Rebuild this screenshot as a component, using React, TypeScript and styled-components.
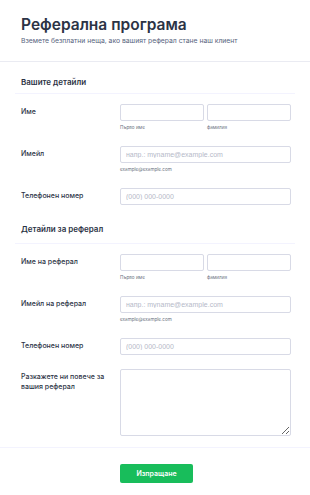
import React from "react";
import styled, { createGlobalStyle } from "styled-components";

const GlobalStyle = createGlobalStyle`
    html, body {
        margin: 0;
        padding: 0;
        background: #ffffff;
    }
    body {
        font-family: Inter, "Noto Sans", "DejaVu Sans", sans-serif;
        color: #2c3345;
    }
    * {
        box-sizing: border-box;
    }
`;

const Page = styled.div`
    width: 310px;
    background: #fff;
`;

const Header = styled.div`
    padding: 15px 21px 15px;
    border-bottom: 1px solid #eaebf2;
`;

const Title = styled.h1`
    margin: 0;
    font-size: 15.5px;
    line-height: 20px;
    font-weight: 600;
    color: #2c3345;
`;

const Subtitle = styled.p`
    margin: 1px 0 0;
    font-size: 6.8px;
    line-height: 10px;
    color: #57647e;
`;

const Section = styled.section`
    padding: 0 15px;
`;

const SectionTitle = styled.h2<{ $top: number; $bottom: number }>`
    margin: 0;
    padding: ${(p) => p.$top}px 6px ${(p) => p.$bottom}px;
    font-size: 8px;
    line-height: 12px;
    font-weight: 600;
    color: #2c3345;
    border-bottom: 1px solid #f3f3fe;
`;

const Body = styled.div`
    padding: 10px 0 0 6px;
`;

const Row = styled.div`
    display: grid;
    grid-template-columns: 99px 171px;
    margin-bottom: 14px;
`;

const Label = styled.label`
    font-size: 7px;
    line-height: 10px;
    font-weight: 500;
    color: #2c3345;
    padding-top: 3px;
    padding-right: 10px;
`;

const Fields = styled.div<{ $cols?: number }>`
    display: grid;
    grid-template-columns: ${(p) => (p.$cols === 2 ? "1fr 1fr" : "1fr")};
    column-gap: 3px;
`;

const Field = styled.div`
    display: flex;
    flex-direction: column;
`;

const Input = styled.input`
    height: 17px;
    width: 100%;
    margin: 0;
    padding: 0 5px;
    border: 1px solid #d8dae6;
    border-radius: 2px;
    font-family: "Liberation Sans", Arial, sans-serif;
    font-size: 7px;
    color: #2c3345;
    background: #fff;
    outline: none;
    &::placeholder {
        color: #b5b9c8;
    }
`;

const TextArea = styled.textarea`
    height: 67px;
    width: 100%;
    margin: 0;
    padding: 4px 5px;
    border: 1px solid #d8dae6;
    border-radius: 2px;
    font-family: "Liberation Sans", Arial, sans-serif;
    font-size: 7px;
    display: block;
    resize: vertical;
    outline: none;
`;

const SubLabel = styled.span`
    margin-top: 3px;
    font-size: 4.6px;
    line-height: 8px;
    color: #6b7280;
`;

const Footer = styled.div`
    border-top: 1px solid #f3f3fe;
    margin-top: -3px;
    padding: 12px 0 17px 120px;
`;

const SubmitButton = styled.button`
    width: 73px;
    height: 19px;
    border: none;
    border-radius: 2px;
    background: #18bd5b;
    color: #fff;
    font-family: Inter, "Noto Sans", sans-serif;
    font-size: 7px;
    font-weight: 600;
    cursor: pointer;
`;

function NameRow({ label }: { label: string }) {
    return (
        <Row>
            <Label>{label}</Label>
            <Fields $cols={2}>
                <Field>
                    <Input />
                    <SubLabel>Първо име</SubLabel>
                </Field>
                <Field>
                    <Input />
                    <SubLabel>фамилия</SubLabel>
                </Field>
            </Fields>
        </Row>
    );
}

function EmailRow({ label }: { label: string }) {
    return (
        <Row>
            <Label>{label}</Label>
            <Fields>
                <Field>
                    <Input placeholder="напр.: myname@example.com" />
                    <SubLabel>example@example.com</SubLabel>
                </Field>
            </Fields>
        </Row>
    );
}

function PhoneRow() {
    return (
        <Row>
            <Label>Телефонен номер</Label>
            <Fields>
                <Input placeholder="(000) 000-0000" />
            </Fields>
        </Row>
    );
}

export default function App() {
    return (
        <Page>
            <GlobalStyle />
            <Header>
                <Title>Реферална програма</Title>
                <Subtitle>Вземете безплатни неща, ако вашият реферал стане наш клиент</Subtitle>
            </Header>

            <Section>
                <SectionTitle $top={14} $bottom={5}>Вашите детайли</SectionTitle>
                <Body>
                    <NameRow label="Име" />
                    <EmailRow label="Имейл" />
                    <PhoneRow />
                </Body>
            </Section>

            <Section>
                <SectionTitle $top={4} $bottom={8}>Детайли за реферал</SectionTitle>
                <Body>
                    <NameRow label="Име на реферал" />
                    <EmailRow label="Имейл на реферал" />
                    <PhoneRow />
                    <Row>
                        <Label>Разкажете ни повече за вашия реферал</Label>
                        <Fields>
                            <TextArea />
                        </Fields>
                    </Row>
                </Body>
            </Section>

            <Footer>
                <SubmitButton type="button">Изпращане</SubmitButton>
            </Footer>
        </Page>
    );
}
